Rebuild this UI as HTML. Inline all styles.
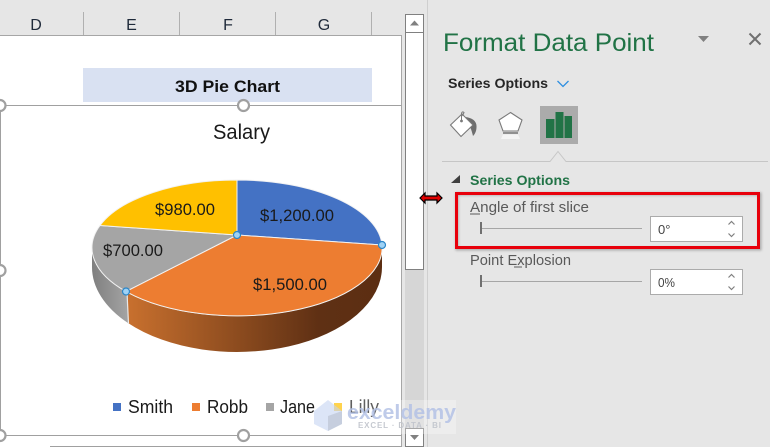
<!DOCTYPE html>
<html><head><meta charset="utf-8"><style>
html,body{margin:0;padding:0;background:#e6e6e6;width:770px;height:447px;overflow:hidden}
svg{display:block}
text{font-family:"Liberation Sans",sans-serif}
</style></head><body>
<svg width="770" height="447" viewBox="0 0 770 447" xmlns="http://www.w3.org/2000/svg">
<defs>
<linearGradient id="o" gradientUnits="userSpaceOnUse" x1="128" y1="0" x2="382" y2="0"><stop offset="0" stop-color="#c8702e"/><stop offset=".45" stop-color="#8a4a1e"/><stop offset=".75" stop-color="#5f3014"/><stop offset="1" stop-color="#5c2e12"/></linearGradient>
<linearGradient id="g" gradientUnits="userSpaceOnUse" x1="92" y1="0" x2="128" y2="0"><stop offset="0" stop-color="#7f7f7f"/><stop offset="1" stop-color="#a4a4a4"/></linearGradient>
<filter id="sh" x="-5%" y="-10%" width="110%" height="120%"><feGaussianBlur stdDeviation="1.2"/></filter>
</defs>
<rect width="770" height="447" fill="#e6e6e6"/>
<!-- sheet -->
<rect x="0" y="35" width="402" height="412" fill="#fff"/>
<path d="M0 35.500H402M401.500 35V447" stroke="#a6a6a6" fill="none"/>
<path d="M83.500 12V35M179.500 12V35M275.500 12V35M371.500 12V35" stroke="#b0b0b0"/>
<g font-size="16" fill="#1f2a3a" text-anchor="middle"><text x="36" y="30">D</text><text x="131.500" y="30">E</text><text x="228" y="30">F</text><text x="324" y="30">G</text></g>
<rect x="83" y="68" width="289" height="34" fill="#d9e1f2"/>
<text x="175" y="92" font-size="17" font-weight="bold" fill="#111" textLength="105" lengthAdjust="spacingAndGlyphs">3D Pie Chart</text>
<!-- chart frame -->
<path d="M1 105.500H401.500M.5 105V435M1 435.500H401.500" stroke="#a0a0a0" fill="none"/>
<path d="M50 446.500H402" stroke="#a0a0a0"/>
<text x="213" y="139" font-size="21" fill="#1a1a1a" textLength="57" lengthAdjust="spacingAndGlyphs">Salary</text>
<!-- pie sides -->
<path d="M92 248A145 68 0 0 0 128 293V323A145 85 0 0 1 92 266Z" fill="url(#g)"/>
<path d="M128 293A145 68 0 0 0 382 248V266A145 85 0 0 1 128 323Z" fill="url(#o)"/>
<path d="M127 292L128.500 324" stroke="#e8e8e8" stroke-width="1.200"/>
<!-- pie top -->
<g stroke="#f2f2f2" stroke-width="1">
<path d="M237 235L237 180A145 68 0 0 1 382 245Z" fill="#4472c4"/>
<path d="M237 235L382 245A145 68 0 0 1 126 291.500Z" fill="#ed7d31"/>
<path d="M237 235L126 291.500A145 68 0 0 1 100 225.500Z" fill="#a5a5a5"/>
<path d="M237 235L100 225.500A145 68 0 0 1 237 180Z" fill="#ffc000"/>
</g>
<g fill="#9fd2f5" stroke="#2c86c8" stroke-width="1.200"><circle cx="237" cy="235" r="3.500"/><circle cx="382" cy="245" r="3.500"/><circle cx="126" cy="291.500" r="3.500"/></g>
<g font-size="17" fill="#1a1a1a">
<text x="260" y="221" textLength="74" lengthAdjust="spacingAndGlyphs">$1,200.00</text>
<text x="155" y="215" textLength="60" lengthAdjust="spacingAndGlyphs">$980.00</text>
<text x="103" y="256" textLength="60" lengthAdjust="spacingAndGlyphs">$700.00</text>
<text x="253" y="290" textLength="74" lengthAdjust="spacingAndGlyphs">$1,500.00</text>
</g>
<!-- legend -->
<rect x="113" y="403" width="8" height="8" fill="#4472c4"/><rect x="192" y="403" width="8" height="8" fill="#ed7d31"/><rect x="266" y="403" width="8" height="8" fill="#a5a5a5"/><rect x="334" y="403" width="8" height="8" fill="#ffc000"/>
<g font-size="18" fill="#1a1a1a">
<text x="128" y="413" textLength="45" lengthAdjust="spacingAndGlyphs">Smith</text>
<text x="207" y="413" textLength="41" lengthAdjust="spacingAndGlyphs">Robb</text>
<text x="280" y="413" textLength="35" lengthAdjust="spacingAndGlyphs">Jane</text>
<text x="349" y="413" textLength="30" lengthAdjust="spacingAndGlyphs">Lilly</text>
</g>
<!-- handles -->
<g fill="#fff" stroke="#a0a0a0" stroke-width="2.200"><circle cx="0" cy="105.500" r="5.500"/><circle cx="243.500" cy="105.500" r="5.500"/><circle cx="0" cy="270.500" r="5.500"/><circle cx="0" cy="435.500" r="5.500"/><circle cx="243.500" cy="435.500" r="5.500"/></g>
<!-- scrollbar -->
<rect x="405" y="33" width="19" height="236" fill="#fff"/>
<rect x="405" y="269" width="19" height="159" fill="#d6d6d6"/>
<path d="M405.500 33V269M423.500 33V269M405 269.500H424" stroke="#808080" fill="none"/>
<path d="M427.500 0V447" stroke="#cfcfcf"/>
<rect x="405.500" y="14.500" width="18" height="18" fill="#fff" stroke="#808080"/>
<path d="M410 25.500L414.500 20.500L419 25.500Z" fill="#808080"/>
<rect x="405.500" y="428.500" width="18" height="18" fill="#fff" stroke="#808080"/>
<path d="M410 435L414.500 440L419 435Z" fill="#808080"/>
<!-- watermark -->
<rect x="314" y="400" width="142" height="34" fill="#fff" opacity=".3"/>
<path d="M314 411L328 400L342 411V424L328 431L314 424Z" fill="#c4d3f2" opacity=".6"/>
<path d="M328 416L342 411V424L328 431Z" fill="#a4adba" opacity=".4"/>
<text x="347" y="419" font-size="20" font-weight="bold" fill="#b4c2e6" opacity=".85" textLength="109" lengthAdjust="spacingAndGlyphs">exceldemy</text>
<text x="358" y="428" font-size="8" font-weight="bold" fill="#c0c4cc" opacity=".9" textLength="83" lengthAdjust="spacing">EXCEL · DATA · BI</text>
<!-- panel -->
<text x="443" y="51" font-size="25" fill="#217346" textLength="211" lengthAdjust="spacingAndGlyphs">Format Data Point</text>
<path d="M698 36H709L703.500 42Z" fill="#808080"/>
<path d="M749.500 33.500L760.500 44.500M760.500 33.500L749.500 44.500" stroke="#707070" stroke-width="2" fill="none"/>
<text x="448" y="88" font-size="14" font-weight="bold" fill="#262626" textLength="100" lengthAdjust="spacingAndGlyphs">Series Options</text>
<path d="M557.500 81L563 86.500L568.500 81" stroke="#2e8fe0" stroke-width="1.300" fill="none"/>
<!-- fill icon -->
<path d="M466 117C472 118 477 121 476.500 127C476.500 131 475 134 473 136C472 132 471 128 469 125Z" fill="#6e6e6e"/>
<path d="M450.500 125L462 114L473 125L461 136.500Z" fill="#fff" stroke="#7a7a7a" stroke-width="1.100"/>
<path d="M461.500 121.500V113.500Q462 111 464 112.500L462.500 116" stroke="#7a7a7a" fill="none"/>
<circle cx="461.500" cy="121" r="1.400" fill="#7a7a7a"/>
<!-- pentagon icon -->
<path d="M510.500 112.500L522 120L518 131H503L499 120Z" fill="#fff" stroke="#7a7a7a" stroke-width="1.100"/>
<path d="M503 133H518" stroke="#7a7a7a" stroke-width="1.600"/>
<path d="M503 134.500H518L520 139H501Z" fill="#f4f4f4"/>
<!-- bars icon -->
<rect x="540" y="106" width="38" height="38" fill="#ababab"/>
<path d="M546 119H554.500V138H546ZM555.500 112H563.500V138H555.500ZM564.500 116H572V138H564.500Z" fill="#217346"/>
<path d="M442 161.500H550L558 151.500L566 161.500H768" stroke="#c6c6c6" fill="none"/>
<path d="M451 183H460V175Z" fill="#404040"/>
<text x="470" y="185" font-size="14" font-weight="bold" fill="#217346" textLength="100" lengthAdjust="spacingAndGlyphs">Series Options</text>
<text x="470" y="212" font-size="15" fill="#595959" textLength="119" lengthAdjust="spacingAndGlyphs">Angle of first slice</text>
<path d="M470 214H480" stroke="#595959"/>
<path d="M481.500 228.500H642" stroke="#a6a6a6"/>
<rect x="480" y="222" width="2" height="12" fill="#707070"/>
<rect x="650.500" y="216.500" width="92" height="25" fill="#fff" stroke="#ababab"/>
<text x="658" y="234" font-size="13" fill="#444">0°</text>
<path d="M728.500 224.500L731.500 221.500L734.500 224.500M728.500 233.500L731.500 236.500L734.500 233.500" stroke="#808080" stroke-width="1.200" fill="none"/>
<text x="470" y="265" font-size="15" fill="#595959" textLength="101" lengthAdjust="spacingAndGlyphs">Point Explosion</text>
<path d="M514 267H522" stroke="#595959"/>
<path d="M481.500 281.500H642" stroke="#a6a6a6"/>
<rect x="480" y="275" width="2" height="12" fill="#707070"/>
<rect x="650.500" y="269.500" width="92" height="25" fill="#fff" stroke="#ababab"/>
<text x="658" y="287" font-size="13" fill="#444" textLength="17" lengthAdjust="spacingAndGlyphs">0%</text>
<path d="M728.500 277.500L731.500 274.500L734.500 277.500M728.500 286.500L731.500 289.500L734.500 286.500" stroke="#808080" stroke-width="1.200" fill="none"/>
<!-- red box -->
<rect x="457" y="194" width="303" height="55" fill="none" stroke="#777" stroke-width="3" opacity=".55" filter="url(#sh)"/>
<rect x="456.500" y="193.500" width="302" height="54" fill="none" stroke="#e8000b" stroke-width="3"/>
<!-- resize cursor -->
<path d="M420 198L425 193V196H437V193L442 198L437 203V200H425V203Z" fill="#e00000" stroke="#000" stroke-width="1.200"/>
</svg>
</body></html>
